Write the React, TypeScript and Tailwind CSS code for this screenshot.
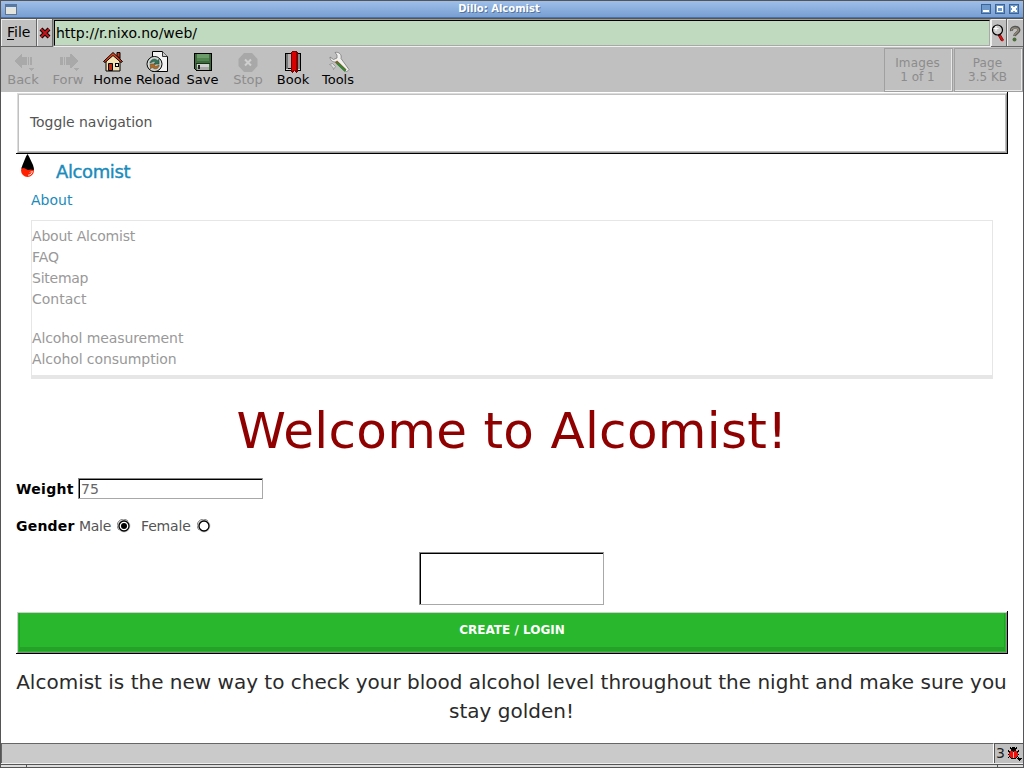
import React from "react";

const FONT = "font-['DejaVu_Sans',sans-serif]";

function WindowButton({ kind }: { kind: "min" | "max" | "close" }) {
  return (
    <svg width="10" height="10" viewBox="0 0 10 10" shapeRendering="crispEdges">
      <rect width="10" height="10" fill="#3d6496" />
      <rect x="1" y="1" width="8" height="8" fill="#6d99cd" />
      {kind === "min" && <rect x="2" y="6" width="6" height="2" fill="#fff" />}
      {kind === "max" && <path d="M2 2h6v6H2zM3 4v3h4V4z" fill="#fff" fillRule="evenodd" />}
      {kind === "close" && <path d="M2 2h2v1h2V2h2v2H7v2h1v2H6V7H4v1H2V6h1V4H2z" fill="#fff" />}
    </svg>
  );
}

function ArrowIcon({ flip }: { flip?: boolean }) {
  return (
    <svg width="24" height="24" viewBox="0 0 24 24" shapeRendering="crispEdges">
      {flip ? (
        <path d="M4 7h3v8H4zM8 7h1v8H8zM10 7h4V4h1l7 7-7 7h-1v-3h-4z" fill="#a9a9a9" />
      ) : (
        <path d="M3 11l7-7h1v3h5v8h-5v3h-1zM17 7h1v8h-1zM19 7h2v8h-2z" fill="#a9a9a9" />
      )}
      <path d="M18 18h5l-2.500 3z" fill="#a9a9a9" />
    </svg>
  );
}

function HomeIcon() {
  return (
    <svg width="24" height="24" viewBox="0 0 24 24">
      <path d="M5 11l7-7 7 7v10H5z" fill="#f3e2b3" stroke="#000" />
      <path d="M16 2.500h3v6l-3-3z" fill="#c83714" stroke="#000" />
      <path d="M2.500 11.500L12 2.500l9.500 9-1.500 1-8-7-8 7z" fill="#e8431d" stroke="#000" />
      <path d="M7.500 13.500h4v7h-4z" fill="#bf2a10" stroke="#000" />
      <rect x="14.500" y="13.500" width="3" height="3" fill="#eee" stroke="#000" />
    </svg>
  );
}

function ReloadIcon() {
  return (
    <svg width="24" height="24" viewBox="0 0 24 24">
      <path d="M6.500 1.500h10l5 5v15h-15z" fill="#f2f2f2" stroke="#000" />
      <path d="M16.500 1.500v5h5" fill="#ccc" stroke="#333" />
      <circle cx="8.500" cy="14" r="7.500" fill="#b9c1bf" stroke="#000" />
      <circle cx="8.500" cy="14" r="6.300" fill="none" stroke="#e0e0e0" />
      <path d="M4 13c1-4 5-5 8-2l1-2v5H8l1.500-2c-2-1-3 0-5.500 1z" fill="#35745b" stroke="#164d32" strokeWidth=".5" />
      <path d="M13 15c0 4-4 5-7 2l-1.500 2v-5h5l-1.500 2c1.500 1 3 0 5-1z" fill="#b06b28" stroke="#694413" strokeWidth=".5" />
    </svg>
  );
}

function SaveIcon() {
  return (
    <svg width="24" height="24" viewBox="0 0 24 24" shapeRendering="crispEdges">
      <path d="M3 3h18v18H5l-2-2z" fill="#000" />
      <path d="M4 4h16v16H5l-1-1z" fill="#3d693d" />
      <path d="M6 4h12v7H6z" fill="#6a9b68" />
      <path d="M6 8h12v3H6z" fill="#50844e" />
      <path d="M5 13h14v1H5z" fill="#163316" />
      <path d="M6 14h12v6H6z" fill="#d0d0d0" />
      <path d="M6 17h12v3H6z" fill="#a8a8a8" />
      <path d="M7 15h2v4H7z" fill="#222" />
    </svg>
  );
}

function StopIcon() {
  return (
    <svg width="24" height="24" viewBox="0 0 24 24">
      <path d="M8 3h8l5.500 6v7L16 22H8l-5.500-6V9z" fill="#a8a8a8" />
      <path d="M9 9.500l6 6M15 9.500l-6 6" stroke="#cfcfcf" strokeWidth="2" />
    </svg>
  );
}

function BookIcon() {
  return (
    <svg width="24" height="24" viewBox="0 0 24 24" shapeRendering="crispEdges">
      <path d="M4 3h16v18H4z" fill="#000" />
      <path d="M5 4h2v16H5z" fill="#777" />
      <path d="M7 4h4v14H7z" fill="#b5b5b5" />
      <path d="M17 4h2v15h-2z" fill="#888" />
      <path d="M5 19h14v1H5z" fill="#ddd" />
      <path d="M10 2h1V1h5v1h1v20h-1v1h-1v-1h-1v-1h-1v1h-1v1h-1v-1h-1z" fill="#7b0000" />
      <path d="M11 2h4v18h-1v1h-1v-1h-1v1h-1z" fill="#d80000" />
    </svg>
  );
}

function ToolsIcon() {
  return (
    <svg width="24" height="24" viewBox="0 0 24 24">
      <path d="M8 2.500c4-1 7 2 6 6l8 11-2.500 2.500-9-10.500C7 13 3 11 3 7l3.500 2.500L10 8V5z" transform="translate(1 0)" fill="#f1f2f0" stroke="#777" strokeWidth=".8" />
      <path d="M3.500 14.500l3-1 3 3-2 3c0-2-2-4-4-5z" fill="#ddd" stroke="#888" strokeWidth=".7" />
      <path d="M10 11.500l9.500 9" stroke="#8b5a2a" strokeWidth="3" />
      <path d="M11 13l8.500 8" stroke="#2c8b38" strokeWidth="2" />
    </svg>
  );
}

function SearchIcon() {
  return (
    <svg width="14" height="20" viewBox="0 0 14 20">
      <path d="M8 10.500l3.500 6" stroke="#600" strokeWidth="3" />
      <path d="M8.500 11.500l3.500 5.500" stroke="#d51010" strokeWidth="2" />
      <circle cx="6.500" cy="6" r="5" fill="#ccc" stroke="#000" strokeWidth="1.200" />
      <path d="M5 2v5M2.500 4.500h5" stroke="#fff" />
    </svg>
  );
}

function HelpIcon() {
  return (
    <svg width="12" height="18" viewBox="0 0 12 18">
      <path d="M2.500 6C1.500 1.500 10 1 10 5c0 3-4 3-4.500 6" fill="none" stroke="#555" strokeWidth="3" />
      <path d="M2.500 5.500C2 2 9.500 2 9.500 5c0 3-4 3-4 5.500" fill="none" stroke="#999079" strokeWidth="1.300" />
      <circle cx="5.500" cy="14.500" r="2" fill="#4c6e3b" />
    </svg>
  );
}

function DropIcon() {
  return (
    <svg width="14" height="24" viewBox="0 0 14 24">
      <circle cx="6.500" cy="16.500" r="6.500" fill="#ff2000" />
      <path d="M6.500 0L8 2.500 12 11l.8 3V16l-3-.5L7 16 3 14 .3 14.500 1.500 11 5 2.500z" fill="#000" />
      <path d="M11.200 17c0 2.500-1.500 4-4 4.200M9 18.500l1-1" fill="none" stroke="#fff" />
    </svg>
  );
}

function BugIcon() {
  return (
    <svg width="15" height="16" viewBox="0 0 15 16" shapeRendering="crispEdges">
      <path d="M3 1h1v1h1V1h3v1h1V1h1v2H9v2h2V4h1v2h-1v2h1v1h-1v2h1v1h-1v-1h-1v1H9v1H4v-1H3v-1H2v1H1v-1h1V9H1V8h1V6H1V4h1v1h2V3H3z" fill="#000" />
      <path d="M3 5h3v7H4v-1H3v-1H2V7h1zM7 5h3v2h1v3h-1v1H9v1H7z" fill="#f20d0d" />
      <path d="M6 6h1v6H6z" fill="#ffb0a0" />
      <path d="M10 12h5v1h-1v1h-1v1h-1v-1h-1v-1h-1z" fill="#000" />
    </svg>
  );
}

function Tool({ label, icon, disabled, box }: { label: string; icon: React.ReactNode; disabled?: boolean; box: string }) {
  return (
    <div className={`flex flex-col items-center ${box} ${disabled ? "text-[#8c8c8c]" : "text-black"}`}>
      <div className="h-6">{icon}</div>
      <div className="-mt-0.5 h-4 text-[13px] leading-4 whitespace-nowrap">{label}</div>
    </div>
  );
}

function Gauge({ top, bottom, box }: { top: string; bottom: string; box: string }) {
  return (
    <div className={`h-11 border border-[#a0a0a0] text-center text-[12px] leading-[14px] text-[#8c8c8c] ${box}`}>
      <div className="h-[42px] border-r border-b border-[#e8e8e8] pt-[7px] pr-px">
        <div className="tracking-[0.15px]">{top}</div>
        <div>{bottom}</div>
      </div>
    </div>
  );
}

function Radio({ checked }: { checked?: boolean }) {
  return (
    <svg width="14" height="14" viewBox="0 0 14 14">
      <circle cx="7" cy="7" r="6.400" fill="#ccc" />
      <path d="M2 11A6 6 0 0 1 11 2" fill="none" stroke="#888" />
      <circle cx="7" cy="7" r="5" fill="#fff" stroke="#000" strokeWidth="1.300" />
      {checked && <circle cx="7" cy="7" r="3" fill="#000" />}
    </svg>
  );
}

export default function App() {
  return (
    <div className={`flex h-[768px] w-[1024px] flex-col overflow-hidden border-x border-t border-[#555558] bg-white ${FONT}`}>
      <header className="flex h-[17px] shrink-0 items-center border-b border-[#4d72a8] bg-linear-to-b from-[#9fbfe9] to-[#789fd2] pl-1">
        <svg width="12" height="11" viewBox="0 0 12 11" shapeRendering="crispEdges">
          <rect width="12" height="11" fill="#64748a" />
          <rect x="1" y="1" width="10" height="9" fill="#e4e4df" />
          <rect x="1" y="1" width="10" height="2" fill="#4a7ab8" />
        </svg>
        <div className="flex-1 text-center text-[10px] leading-4 font-bold text-white [text-shadow:1px_1px_0_#55749f]">Dillo: Alcomist</div>
        <div className="flex gap-1 pr-1">
          <WindowButton kind="min" />
          <WindowButton kind="max" />
          <WindowButton kind="close" />
        </div>
      </header>

      <div className="flex h-[29px] shrink-0 border-t border-[#555] bg-[#c0c0c0]">
        <div className="h-7 w-9 border-r border-b border-[#666] pt-[3px] pl-[6px] text-[14px] leading-5 shadow-[inset_1px_1px_0_#eee]">
          <span className="underline decoration-1 underline-offset-2">F</span>ile
        </div>
        <div className="flex h-7 w-4 items-center justify-center border-r border-b border-[#666] shadow-[inset_1px_1px_0_#eee]">
          <svg width="12" height="12" viewBox="0 0 12 12">
            <path d="M2 2l8 8M10 2l-8 8" stroke="#000" strokeWidth="4" />
            <path d="M2 2l8 8M10 2l-8 8" stroke="#cf1018" strokeWidth="2" />
          </svg>
        </div>
        <div className="h-7 flex-1 border-t border-r border-b border-l border-t-[#999] border-r-[#f0f0f0] border-b-[#f0f0f0] border-l-[#999]">
          <div className="h-[26px] border border-t-black border-r-[#a8a8a8] border-b-[#a8a8a8] border-l-black bg-[#c0dabf] pt-0.5 pl-px text-[14px] leading-5">http://r.nixo.no/web/</div>
        </div>
        <div className="h-7 w-4 border-r border-b border-[#666] pt-[5px] shadow-[inset_1px_1px_0_#eee]"><SearchIcon /></div>
        <div className="h-7 w-4 border-b border-[#666] pt-[6px] pl-0.5 shadow-[inset_1px_1px_0_#eee]"><HelpIcon /></div>
      </div>

      <div className="flex h-[45px] shrink-0 border-b border-[#c0c0c0] bg-[#c0c0c0] pt-px">
        <div className="flex flex-1 pt-0.5">
          <Tool label="Back" icon={<ArrowIcon />} disabled box="w-[44px]" />
          <Tool label="Forw" icon={<ArrowIcon flip />} disabled box="w-[46px]" />
          <Tool label="Home" icon={<HomeIcon />} box="w-[43px]" />
          <Tool label="Reload" icon={<ReloadIcon />} box="w-[48px]" />
          <Tool label="Save" icon={<SaveIcon />} box="w-[41px]" />
          <Tool label="Stop" icon={<StopIcon />} disabled box="w-[50px]" />
          <Tool label="Book" icon={<BookIcon />} box="w-[40px]" />
          <Tool label="Tools" icon={<ToolsIcon />} box="w-[50px]" />
        </div>
        <div className="flex gap-px">
          <Gauge top="Images" bottom="1 of 1" box="w-[69px]" />
          <Gauge top="Page" bottom="3.5 KB" box="w-[69px]" />
        </div>
      </div>

      <main className="flex min-h-0 flex-1 flex-col pl-[15px]">
        <div className="h-[62px] w-[992px] shrink-0 border-r border-b border-black pt-px pl-px">
          <div className="h-[60px] border border-t-[#dcdcdc] border-r-[#999] border-b-[#999] border-l-[#dcdcdc]">
            <div className="h-[58px] border border-[#c0c0c0] pt-[17px] pl-[11px] text-[14px] leading-[21px] tracking-[-0.06px] text-[#555]">Toggle navigation</div>
          </div>
        </div>
        <div className="flex h-9 shrink-0 pl-[5px]">
          <DropIcon />
          <div className="pt-[6px] pl-[21px] text-[18px] leading-6 tracking-[-0.38px] text-[#1b8bbb] [-webkit-text-stroke:0.4px_#1b8bbb]">Alcomist</div>
        </div>
        <div className="h-[30px] shrink-0 pl-[15px] text-[14px] leading-[21px] text-[#1b8bbb]">About</div>
        <nav className="ml-[15px] h-[159px] w-[962px] shrink-0 border border-b-[4px] border-[#e6e6e6] pt-[5px] text-[14px] leading-[21px] text-[#999]">
          <div className="tracking-[-0.2px]">About Alcomist</div>
          <div>FAQ</div>
          <div className="tracking-[-0.25px]">Sitemap</div>
          <div>Contact</div>
          <div className="mt-[18px] tracking-[-0.1px]">Alcohol measurement</div>
          <div className="tracking-[-0.08px]">Alcohol consumption</div>
        </nav>
        <h1 className="h-[99px] w-[992px] shrink-0 pt-[21px] text-center text-[50px] leading-[62px] tracking-[0.3px] whitespace-nowrap text-[#8f0000]">Welcome to Alcomist!</h1>
        <div className="flex h-[38px] shrink-0 text-[14px] leading-[21px]">
          <label className="w-[62px] pt-px font-bold tracking-[0.3px] text-black">Weight</label>
          <div className="h-[21px] w-[185px] border border-t-[#888] border-r-[#a8a8a8] border-b-[#a8a8a8] border-l-[#888]">
            <div className="h-[19px] border-t border-l border-black pl-px leading-[18px] text-[#666]">75</div>
          </div>
        </div>
        <div className="flex h-9 shrink-0 text-[14px] leading-[21px] text-[#555]">
          <span className="w-[63px] font-bold tracking-[0.2px] text-black">Gender</span>
          <span className="w-[38px] tracking-[-0.3px]">Male</span>
          <span className="w-6 pt-[3px]"><Radio checked /></span>
          <span className="w-[56px] tracking-[-0.15px]">Female</span>
          <span className="pt-[3px]"><Radio /></span>
        </div>
        <div className="ml-[403px] h-[53px] w-[185px] shrink-0 border border-t-[#888] border-r-[#a8a8a8] border-b-[#a8a8a8] border-l-[#888]">
          <div className="h-[51px] border-t border-l border-black" />
        </div>
        <div className="mt-[6px] h-[43px] w-[992px] shrink-0 border-r border-b border-black pt-px pl-px">
          <div className="h-[41px] border border-t-[#d0d0d0] border-r-[#888] border-b-[#888] border-l-[#d0d0d0]">
            <div className="h-[39px] bg-[#29b82d] px-px">
              <div className="h-[38px] border-x border-b-[4px] border-[#25a028] pt-[7px] text-center text-[12px] leading-5 font-bold text-white">CREATE / LOGIN</div>
            </div>
          </div>
        </div>
        <p className="w-[991px] shrink-0 pt-[14px] text-center text-[20px] leading-[29px] whitespace-nowrap text-[#2a2a2a]">
          Alcomist is the new way to check your blood alcohol level throughout the night and make sure you<br />stay golden!
        </p>
      </main>

      <footer className="h-[25px] shrink-0 bg-[#c0c0c0]">
        <div className="flex h-[20px]">
          <div className="flex-1 border-t border-r border-l border-t-[#666] border-r-white border-l-[#666] bg-[#cacaca]" />
          <div className="flex w-[29px] border-t border-l border-[#555] pl-px text-[14px] leading-[19px] text-[#222]">
            <span className="w-[11px]">3</span>
            <span className="pt-0.5"><BugIcon /></span>
          </div>
        </div>
        <div className="h-px bg-[#eee]" />
        <div className="flex h-1 border-y border-[#555] bg-[#ddd]">
          <div className="w-[26px] border-r border-[#555]" />
          <div className="flex-1" />
          <div className="w-[26px] border-l border-[#555]" />
        </div>
      </footer>
    </div>
  );
}
